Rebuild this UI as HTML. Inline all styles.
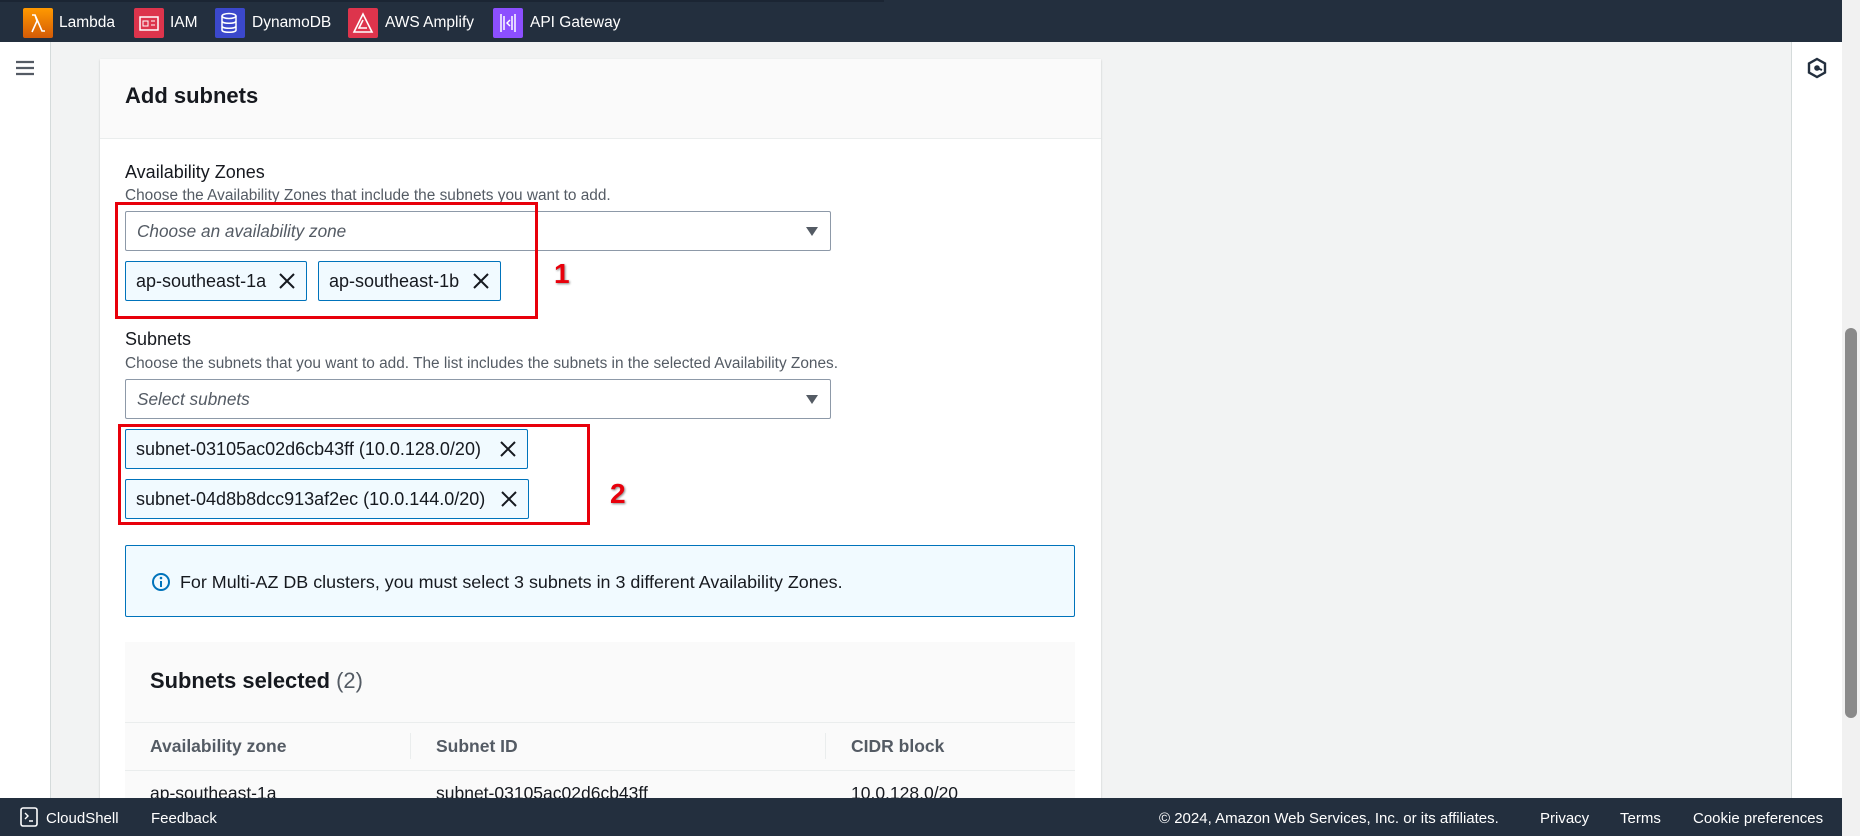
<!DOCTYPE html>
<html><head><meta charset="utf-8"><style>
*{box-sizing:border-box;margin:0;padding:0}
body{width:1860px;height:836px;overflow:hidden;background:#f2f3f3;font-family:"Liberation Sans",sans-serif;color:#16191f;position:relative}
.abs{position:absolute}
.top{left:0;top:0;width:1842px;height:42px;background:#232f3e}
.svc{position:absolute;top:9px;height:28px;color:#fff;font-size:15.5px;line-height:28px}
.ic{position:absolute;top:8px;width:30px;height:30px;border-radius:2px}
.foot{left:0;top:798px;width:1842px;height:38px;background:#232f3e;color:#fff;font-size:15px}
.foot span{position:absolute;top:12px}
.lbl{font-size:18px}
.desc{font-size:15.4px;color:#545b64}
.inp{border:1px solid #8d99a8;background:#fff;border-radius:2px;font-style:italic;font-size:17.2px;color:#545b64;padding-left:11px}
.tri{position:absolute;right:12px;top:50%;margin-top:-4px;border-left:6px solid transparent;border-right:6px solid transparent;border-top:9px solid #545b64}
.tok{border:1px solid #0073bb;background:#f1faff;border-radius:2px;font-size:18px;padding-left:10px}
.x{position:absolute;right:10px;top:50%;margin-top:-9px;width:18px;height:18px}
.red{border:3px solid #e8000b}
.num{color:#e8000b;font-weight:bold;font-size:28px;text-shadow:1px 1px 2px #888}
</style></head><body>
<div class="abs top"></div>
<div class="abs" style="left:0;top:0;width:884px;height:2px;background:#1b2533"></div>
<div class="ic" style="left:23px;background:linear-gradient(#f90,#d45b07)"><svg width="30" height="30"><path d="M9 24L14 13L12 7H9M12 7L19 23H22" stroke="#fff" stroke-width="1.6" fill="none"/></svg></div>
<div class="svc" style="left:59px">Lambda</div>
<div class="ic" style="left:134px;background:#dd344c"><svg width="30" height="30"><rect x="6" y="9" width="18" height="13" stroke="#fff" fill="none" stroke-width="1.5"/><rect x="9" y="13" width="5" height="5" stroke="#fff" fill="none"/><path d="M17 13h4M17 17h4" stroke="#fff"/></svg></div>
<div class="svc" style="left:170px">IAM</div>
<div class="ic" style="left:215px;background:#3b48cc"><svg width="30" height="30"><ellipse cx="14" cy="8" rx="7" ry="2.5" stroke="#fff" fill="none" stroke-width="1.5"/><path d="M7 8v14c0 3 14 3 14 0V8M7 13c0 3 14 3 14 0M7 18c0 3 14 3 14 0" stroke="#fff" fill="none" stroke-width="1.5"/></svg></div>
<div class="svc" style="left:252px">DynamoDB</div>
<div class="ic" style="left:348px;background:#dd344c"><svg width="30" height="30"><path d="M15 6L6 24H24ZM15 12L11 20H19" stroke="#fff" fill="none" stroke-width="1.6"/></svg></div>
<div class="svc" style="left:385px">AWS Amplify</div>
<div class="ic" style="left:493px;background:#8c4fff"><svg width="30" height="30"><path d="M8 6v18M22 6v18M11 8v14M19 8v14M17 12l-3 3 3 3" stroke="#fff" fill="none" stroke-width="1.5"/></svg></div>
<div class="svc" style="left:530px">API Gateway</div>

<div class="abs" style="left:0;top:42px;width:51px;height:756px;background:#fff;border-right:1px solid #d5dbdb"></div>
<svg class="abs" style="left:15px;top:60px" width="20" height="16"><path d="M1 2h18M1 8h18M1 14h18" stroke="#545b64" stroke-width="2.2"/></svg>
<div class="abs" style="left:1791px;top:42px;width:51px;height:756px;background:#fff;border-left:1px solid #d5dbdb"></div>
<svg class="abs" style="left:1806px;top:57px" width="22" height="22"><path d="M11 2l8 4.5v9L11 20l-8-4.5v-9z" stroke="#232f3e" stroke-width="2.4" fill="none"/><circle cx="11" cy="11" r="2.8" fill="#232f3e"/><path d="M11 11l5 2" stroke="#232f3e" stroke-width="2"/></svg>
<div class="abs" style="left:1842px;top:0;width:18px;height:836px;background:#f1f1f1"></div>
<div class="abs" style="left:1845px;top:328px;width:12px;height:390px;background:#8a8a8a;border-radius:6px"></div>

<div class="abs" style="left:100px;top:59px;width:1001px;height:739px;background:#fff;box-shadow:0 1px 2px rgba(0,0,0,.2)"></div>
<div class="abs" style="left:100px;top:59px;width:1001px;height:80px;background:#fafafa;border-bottom:1px solid #eaeded"></div>
<div class="abs" style="left:125px;top:81px;font-size:22px;font-weight:bold;line-height:30px">Add subnets</div>

<div class="abs lbl" style="left:125px;top:162px">Availability Zones</div>
<div class="abs desc" style="left:125px;top:187px">Choose the Availability Zones that include the subnets you want to add.</div>
<div class="abs inp" style="left:125px;top:211px;width:706px;height:40px;line-height:38px">Choose an availability zone<div class="tri"></div></div>
<div class="abs tok" style="left:125px;top:261px;width:182px;height:40px;line-height:38px">ap-southeast-1a<svg class="x" viewBox="0 0 18 18"><path d="M2 2l14 14M16 2L2 16" stroke="#16191f" stroke-width="2"/></svg></div>
<div class="abs tok" style="left:318px;top:261px;width:183px;height:40px;line-height:38px">ap-southeast-1b<svg class="x" viewBox="0 0 18 18"><path d="M2 2l14 14M16 2L2 16" stroke="#16191f" stroke-width="2"/></svg></div>
<div class="abs red" style="left:115px;top:202px;width:423px;height:117px"></div>
<div class="abs num" style="left:554px;top:258px">1</div>

<div class="abs lbl" style="left:125px;top:329px">Subnets</div>
<div class="abs desc" style="left:125px;top:355px">Choose the subnets that you want to add. The list includes the subnets in the selected Availability Zones.</div>
<div class="abs inp" style="left:125px;top:379px;width:706px;height:40px;line-height:38px">Select subnets<div class="tri"></div></div>
<div class="abs tok" style="left:125px;top:429px;width:403px;height:40px;line-height:38px">subnet-03105ac02d6cb43ff (10.0.128.0/20)<svg class="x" viewBox="0 0 18 18"><path d="M2 2l14 14M16 2L2 16" stroke="#16191f" stroke-width="2"/></svg></div>
<div class="abs tok" style="left:125px;top:479px;width:404px;height:40px;line-height:38px">subnet-04d8b8dcc913af2ec (10.0.144.0/20)<svg class="x" viewBox="0 0 18 18"><path d="M2 2l14 14M16 2L2 16" stroke="#16191f" stroke-width="2"/></svg></div>
<div class="abs red" style="left:118px;top:424px;width:472px;height:101px"></div>
<div class="abs num" style="left:610px;top:478px">2</div>

<div class="abs" style="left:125px;top:545px;width:950px;height:72px;background:#f1faff;border:1px solid #0073bb;border-radius:2px"></div>
<svg class="abs" style="left:151px;top:572px" width="20" height="20"><circle cx="10" cy="10" r="8" stroke="#0073bb" stroke-width="2" fill="none"/><path d="M10 9v6" stroke="#0073bb" stroke-width="2"/><circle cx="10" cy="6" r="1.3" fill="#0073bb"/></svg>
<div class="abs" style="left:180px;top:572px;font-size:17.9px">For Multi-AZ DB clusters, you must select 3 subnets in 3 different Availability Zones.</div>

<div class="abs" style="left:125px;top:642px;width:950px;height:156px;background:#fafafa"></div>
<div class="abs" style="left:150px;top:668px;font-size:21.9px;font-weight:bold">Subnets selected <span style="font-weight:normal;color:#545b64">(2)</span></div>
<div class="abs" style="left:125px;top:722px;width:950px;height:1px;background:#eaeded"></div>
<div class="abs" style="left:125px;top:770px;width:950px;height:1px;background:#eaeded"></div>
<div class="abs" style="left:410px;top:733px;width:1px;height:26px;background:#eaeded"></div>
<div class="abs" style="left:825px;top:733px;width:1px;height:26px;background:#eaeded"></div>
<div class="abs" style="left:150px;top:736px;font-size:17.5px;font-weight:bold;color:#545b64">Availability zone</div>
<div class="abs" style="left:436px;top:736px;font-size:17.5px;font-weight:bold;color:#545b64">Subnet ID</div>
<div class="abs" style="left:851px;top:736px;font-size:17.5px;font-weight:bold;color:#545b64">CIDR block</div>
<div class="abs" style="left:150px;top:783px;font-size:17.5px">ap-southeast-1a</div>
<div class="abs" style="left:436px;top:783px;font-size:17.5px">subnet-03105ac02d6cb43ff</div>
<div class="abs" style="left:851px;top:783px;font-size:17.5px">10.0.128.0/20</div>

<div class="abs foot"><svg style="position:absolute;left:20px;top:9px" width="18" height="20"><rect x="1" y="1" width="16" height="18" rx="2" stroke="#fff" stroke-width="1.6" fill="none"/><path d="M5 6l3 3-3 3M9 14h4" stroke="#fff" stroke-width="1.4" fill="none"/></svg>
<span style="left:46px">CloudShell</span><span style="left:151px">Feedback</span>
<span style="left:1159px">© 2024, Amazon Web Services, Inc. or its affiliates.</span>
<span style="left:1540px">Privacy</span><span style="left:1620px">Terms</span><span style="left:1693px">Cookie preferences</span></div>
</body></html>
